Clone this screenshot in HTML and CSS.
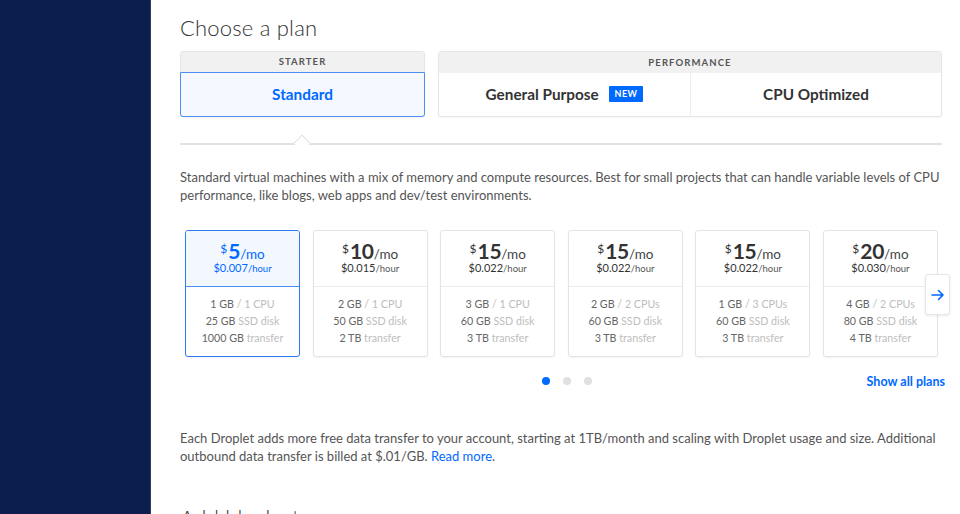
FILE: index.html
```html
<!DOCTYPE html>
<html lang="en">
<head>
<meta charset="utf-8">
<title>Choose a plan</title>
<link rel="stylesheet" href="styles.css">
</head>
<body>
<div class="layout">
  <aside class="sidebar"></aside>
  <main class="main">
    <h1 class="title">Choose a plan</h1>

    <div class="tab-groups">
      <div class="tab-group starter">
        <div class="group-head">STARTER</div>
        <div class="group-tabs">
          <div class="tab active">Standard</div>
        </div>
      </div>
      <div class="tab-group performance">
        <div class="group-head">PERFORMANCE</div>
        <div class="group-tabs two">
          <div class="tab">General Purpose <span class="badge">NEW</span></div>
          <div class="tab">CPU Optimized</div>
        </div>
      </div>
    </div>

    <div class="separator"><span class="notch"></span></div>

    <p class="desc">Standard virtual machines with a mix of memory and compute resources. Best for small projects that can handle variable levels of CPU performance, like blogs, web apps and dev/test environments.</p>

    <div class="carousel">
      <div class="cards">
        <div class="card selected">
          <div class="card-top">
            <div class="price"><span class="cur">$</span><span class="amt">5</span><span class="per">/mo</span></div>
            <div class="hourly">$0.007<span class="hr">/hour</span></div>
          </div>
          <div class="card-bottom">
            <div>1 GB <span class="u">/ 1 CPU</span></div>
            <div>25 GB <span class="u">SSD disk</span></div>
            <div>1000 GB <span class="u">transfer</span></div>
          </div>
        </div>
        <div class="card">
          <div class="card-top">
            <div class="price"><span class="cur">$</span><span class="amt">10</span><span class="per">/mo</span></div>
            <div class="hourly">$0.015<span class="hr">/hour</span></div>
          </div>
          <div class="card-bottom">
            <div>2 GB <span class="u">/ 1 CPU</span></div>
            <div>50 GB <span class="u">SSD disk</span></div>
            <div>2 TB <span class="u">transfer</span></div>
          </div>
        </div>
        <div class="card">
          <div class="card-top">
            <div class="price"><span class="cur">$</span><span class="amt">15</span><span class="per">/mo</span></div>
            <div class="hourly">$0.022<span class="hr">/hour</span></div>
          </div>
          <div class="card-bottom">
            <div>3 GB <span class="u">/ 1 CPU</span></div>
            <div>60 GB <span class="u">SSD disk</span></div>
            <div>3 TB <span class="u">transfer</span></div>
          </div>
        </div>
        <div class="card">
          <div class="card-top">
            <div class="price"><span class="cur">$</span><span class="amt">15</span><span class="per">/mo</span></div>
            <div class="hourly">$0.022<span class="hr">/hour</span></div>
          </div>
          <div class="card-bottom">
            <div>2 GB <span class="u">/ 2 CPUs</span></div>
            <div>60 GB <span class="u">SSD disk</span></div>
            <div>3 TB <span class="u">transfer</span></div>
          </div>
        </div>
        <div class="card">
          <div class="card-top">
            <div class="price"><span class="cur">$</span><span class="amt">15</span><span class="per">/mo</span></div>
            <div class="hourly">$0.022<span class="hr">/hour</span></div>
          </div>
          <div class="card-bottom">
            <div>1 GB <span class="u">/ 3 CPUs</span></div>
            <div>60 GB <span class="u">SSD disk</span></div>
            <div>3 TB <span class="u">transfer</span></div>
          </div>
        </div>
        <div class="card">
          <div class="card-top">
            <div class="price"><span class="cur">$</span><span class="amt">20</span><span class="per">/mo</span></div>
            <div class="hourly">$0.030<span class="hr">/hour</span></div>
          </div>
          <div class="card-bottom">
            <div>4 GB <span class="u">/ 2 CPUs</span></div>
            <div>80 GB <span class="u">SSD disk</span></div>
            <div>4 TB <span class="u">transfer</span></div>
          </div>
        </div>
      </div>
      <button class="next" aria-label="Next">
        <svg width="14" height="12" viewBox="0 0 14 12" aria-hidden="true"><path d="M1 6h11M7.5 1.5L12 6l-4.5 4.5" fill="none" stroke="#0069ff" stroke-width="1.6" stroke-linecap="round" stroke-linejoin="round"/></svg>
      </button>
    </div>

    <div class="pager">
      <span></span>
      <div class="dots"><span class="dot on"></span><span class="dot"></span><span class="dot"></span></div>
      <a class="show-all" href="#">Show all plans</a>
    </div>

    <p class="note">Each Droplet adds more free data transfer to your account, starting at 1TB/month and scaling with Droplet usage and size. Additional outbound data transfer is billed at $.01/GB. <a href="#">Read more</a>.</p>

    <h2 class="title next-title">Add block storage</h2>
  </main>
</div>
</body>
</html>
```

FILE: styles.css
```css
* { box-sizing: border-box; }
html, body {
  margin: 0;
  height: 514px;
  overflow: hidden;
  background: #fff;
  font-family: Lato, "Noto Sans", sans-serif;
  color: #333;
}
.layout {
  display: flex;
  height: 514px;
}
.sidebar {
  width: 151px;
  flex: none;
  background: #0b1e4e;
  border-right: 1px solid #2c3c66;
}
.main {
  flex: 1;
  padding: 13px 18px 0 29px;
  width: 809px;
}
.title {
  margin: 0;
  font-size: 22px;
  line-height: 30px;
  font-weight: 300;
  color: #333;
  letter-spacing: 0.2px;
}
.tab-groups {
  margin-top: 8px;
  display: grid;
  grid-template-columns: 245px 504px;
  column-gap: 13px;
  width: 762px;
}
.tab-group {
  border: 1px solid #e6e6e6;
  border-radius: 3px;
  background: #fff;
  box-shadow: 0 1px 2px rgba(0,0,0,0.04);
}
.group-head {
  height: 20px;
  background: #f1f1f1;
  font-size: 9.5px;
  font-weight: 700;
  letter-spacing: 1.1px;
  color: #555;
  text-align: center;
  line-height: 20px;
}
.performance .group-head { height: 21px; line-height: 21px; }
.group-tabs {
  display: grid;
  grid-template-columns: 1fr;
  height: 44px;
}
.performance .group-tabs { height: 43px; }
.group-tabs.two { grid-template-columns: 1fr 1fr; }
.group-tabs.two .tab + .tab { border-left: 1px solid #eee; }
.tab {
  display: flex;
  align-items: center;
  justify-content: center;
  gap: 10px;
  font-size: 15.3px;
  font-weight: 700;
  color: #333;
  padding-bottom: 1px;
}
.tab.active {
  margin: 0 -1px -1px;
  border: 1px solid #4d8ff0;
  border-radius: 0 0 3px 3px;
  background: #f5f9ff;
  color: #0069ff;
  height: 45px;
}
.badge {
  background: #0069ff;
  color: #fff;
  font-size: 9px;
  font-weight: 700;
  letter-spacing: 0.4px;
  padding: 0 6px;
  height: 16px;
  line-height: 16px;
  border-radius: 1px;
}
.separator {
  position: relative;
  margin-top: 26px;
  width: 762px;
  height: 2px;
  background: #e2e2e2;
}
.notch {
  position: absolute;
  left: 116px;
  top: -6px;
  width: 12px;
  height: 12px;
  background: #fff;
  border-left: 1.5px solid #e2e2e2;
  border-top: 1.5px solid #e2e2e2;
  transform: rotate(45deg);
}
.desc, .note {
  margin: 0;
  font-size: 13px;
  line-height: 18px;
  color: #555;
  width: 762px;
}
.desc { margin-top: 23px; }
.carousel {
  position: relative;
  margin-top: 26px;
  padding-left: 5px;
}
.cards {
  display: grid;
  grid-template-columns: repeat(6, 115px);
  column-gap: 12.6px;
}
.card {
  height: 127px;
  border: 1px solid #e4e4e4;
  border-radius: 3px;
  background: #fff;
  box-shadow: 0 1px 2px rgba(0,0,0,0.05);
  text-align: center;
  overflow: hidden;
}
.card-top {
  height: 56px;
  padding-top: 7px;
  border-bottom: 1px solid #ececec;
}
.price {
  height: 22px;
  line-height: 22px;
  color: #333;
}
.cur {
  font-size: 12px;
  vertical-align: 6px;
  margin-right: 1px;
}
.amt {
  font-size: 21px;
  font-weight: 700;
  letter-spacing: -0.3px;
}
.per {
  font-size: 13.5px;
  color: #444;
}
.hourly {
  margin-top: 1px;
  font-size: 11px;
  line-height: 14px;
  color: #333;
}
.hr { font-size: 9.5px; color: #555; }
.card-bottom {
  padding-top: 8px;
  font-size: 10.7px;
  line-height: 17px;
  color: #666;
}
.u { color: #bdbdbd; }
.card.selected {
  border-color: #2f7cf0;
}
.card.selected .card-top {
  background: #f3f8ff;
  border-bottom-color: #4d8ff0;
}
.card.selected .price,
.card.selected .per,
.card.selected .hourly,
.card.selected .hr { color: #0069ff; }
.next {
  position: absolute;
  left: 745px;
  top: 44px;
  width: 25px;
  height: 41px;
  padding: 0;
  border: 1px solid #e6e6e6;
  border-radius: 3px;
  background: #fff;
  box-shadow: 0 1px 3px rgba(0,0,0,0.08);
  display: flex;
  align-items: center;
  justify-content: center;
}
.pager {
  margin-top: 16px;
  width: 765px;
  height: 16px;
  display: grid;
  grid-template-columns: 1fr auto 1fr;
  align-items: center;
  padding-left: 8px;
}
.dots {
  display: flex;
  gap: 13px;
}
.dot {
  width: 8px;
  height: 8px;
  border-radius: 50%;
  background: #e0e0e0;
}
.dot.on { background: #0069ff; }
.show-all {
  justify-self: end;
  font-size: 12.5px;
  font-weight: 700;
  color: #0069ff;
  text-decoration: none;
}
.note { margin-top: 40px; }
.note a { color: #0069ff; text-decoration: none; }
.next-title { margin-top: 38px; }
```
